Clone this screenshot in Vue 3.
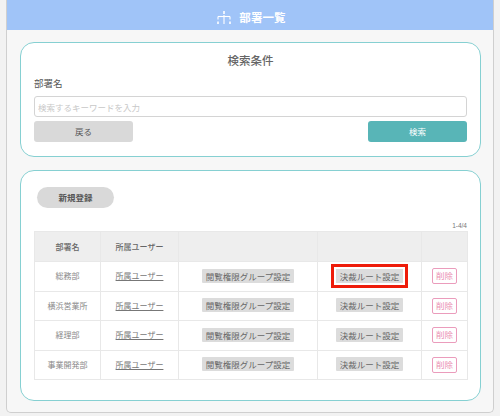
<script setup>
const rows = [
  { name: '総務部', hl: true },
  { name: '横浜営業所', hl: false },
  { name: '経理部', hl: false },
  { name: '事業開発部', hl: false },
]
</script>

<template>
  <div class="page">
    <div class="panel">
      <header class="bar">
        <svg class="ico" width="14" height="14" viewBox="0 0 14 14" fill="none" stroke="#fff" stroke-width="1.1">
          <path d="M7 0v3" stroke-width="1.6" />
          <path d="M7 4v9" />
          <path d="M1 5.5h12" />
          <path d="M1 5.5v3M13 5.5v3" />
          <path d="M1 10.5v2.5M13 10.5v2.5" stroke-width="1.6" />
        </svg>
        <h1>部署一覧</h1>
      </header>

      <section class="card search">
        <h2>検索条件</h2>
        <label class="lbl">部署名</label>
        <input class="inp" placeholder="検索するキーワードを入力" />
        <div class="actions">
          <button class="btn back">戻る</button>
          <button class="btn go">検索</button>
        </div>
      </section>

      <section class="card list">
        <button class="new">新規登録</button>
        <div class="count">1-4/4</div>
        <table>
          <colgroup>
            <col class="c1" /><col class="c2" /><col class="c3" /><col class="c4" /><col class="c5" />
          </colgroup>
          <thead>
            <tr><th>部署名</th><th>所属ユーザー</th><th></th><th></th><th></th></tr>
          </thead>
          <tbody>
            <tr v-for="r in rows" :key="r.name">
              <td>{{ r.name }}</td>
              <td><a class="lnk">所属ユーザー</a></td>
              <td><span class="tag">閲覧権限グループ設定</span></td>
              <td><span class="tag" :class="{ hl: r.hl }">決裁ルート設定</span></td>
              <td><span class="del">削除</span></td>
            </tr>
          </tbody>
        </table>
      </section>
    </div>
  </div>
</template>

<style>
html, body { margin: 0; background: #f2f2f2; }
</style>

<style scoped>
.page {
  width: 500px;
  height: 416px;
  box-sizing: border-box;
  padding: 0 6px 3px;
  background: #f2f2f2;
  font-family: "Noto Sans CJK JP", "Noto Sans", sans-serif;
  color: #666;
  overflow: hidden;
}
.panel {
  height: 100%;
  box-sizing: border-box;
  background: #f7f7f7;
  border: 1px solid #cfcfcf;
  border-top: 0;
  border-radius: 0 0 5px 5px;
  padding: 0 12px 0 13px;
}
.bar {
  margin: 0 -12px 0 -13px;
  height: 30px;
  background: #a0c4f8;
  display: flex;
  align-items: center;
  justify-content: center;
  gap: 8px;
  padding: 4px 0 0 3px;
  box-sizing: border-box;
  color: #fff;
}
.ico { margin-top: 1px; }
h1 { margin: 0; font-size: 11.5px; font-weight: 700; letter-spacing: 0.1px; }
.card {
  background: #fff;
  border: 1px solid #86d0d2;
  border-radius: 14px;
  box-sizing: border-box;
}
.search {
  margin-top: 12px;
  height: 115px;
  padding: 0 13px;
}
h2 {
  margin: 9px 0 0;
  font-size: 11.5px;
  line-height: 17px;
  font-weight: 500;
  text-align: center;
  color: #666;
}
.lbl { display: block; margin-top: 7px; font-size: 9.5px; line-height: 15px; color: #555; }
.inp {
  display: block;
  width: 100%;
  height: 21px;
  margin-top: 5px;
  box-sizing: border-box;
  border: 1px solid #d4d4d4;
  border-radius: 3px;
  padding: 0 3px;
  font: 8.5px "Noto Sans CJK JP", sans-serif;
  outline: 0;
}
.inp::placeholder { color: #c8c8c8; }
.actions { display: flex; justify-content: space-between; margin-top: 4px; }
.btn {
  width: 99px;
  height: 21px;
  border: 0;
  border-radius: 3px;
  padding: 0 0 1px;
  font: 8.5px "Noto Sans CJK JP", sans-serif;
}
.back { background: #d9d9d9; color: #555; }
.go { background: #58b5b7; color: #fff; }
.list {
  margin-top: 13px;
  height: 231px;
  padding: 16px 13px 0;
}
.new {
  display: block;
  width: 77px;
  height: 21px;
  margin-left: 3px;
  border: 0;
  border-radius: 11px;
  padding: 0 0 2px;
  background: #d9d9d9;
  color: #555;
  font: 700 8.5px "Noto Sans CJK JP", sans-serif;
}
.count {
  margin-top: 12px;
  height: 11px;
  text-align: right;
  font: 6.5px/11px "Liberation Sans", sans-serif;
  color: #777;
}
table {
  width: 433px;
  border-collapse: collapse;
  table-layout: fixed;
  font-size: 8px;
  color: #888;
}
.c1 { width: 66px; }
.c2 { width: 78px; }
.c3 { width: 139px; }
.c4 { width: 104px; }
.c5 { width: 46px; }
th, td {
  border: 1px solid #e8e8e8;
  padding: 0;
  text-align: center;
  vertical-align: middle;
}
th { height: 29px; background: #eee; font-weight: 500; color: #666; }
td { height: 28.5px; background: #fff; line-height: 12px; }
.lnk { text-decoration: underline; color: #777; }
.tag {
  display: block;
  width: fit-content;
  margin: 0 auto 1px;
  background: #dcdcdc;
  color: #666;
  line-height: 14px;
  padding: 0 4px;
  border-radius: 1px;
  font-size: 8.5px;
}
.hl { border-radius: 0; box-shadow: 0 0 0 2px #fff, 0 0 0 5px #ee1c0a; }
.del {
  display: block;
  margin: 0 auto;
  width: 25px;
  height: 16px;
  box-sizing: border-box;
  line-height: 13px;
  border: 1px solid #eb9cbc;
  border-radius: 2px;
  color: #ea8fb2;
  font-size: 8.5px;
}
</style>
